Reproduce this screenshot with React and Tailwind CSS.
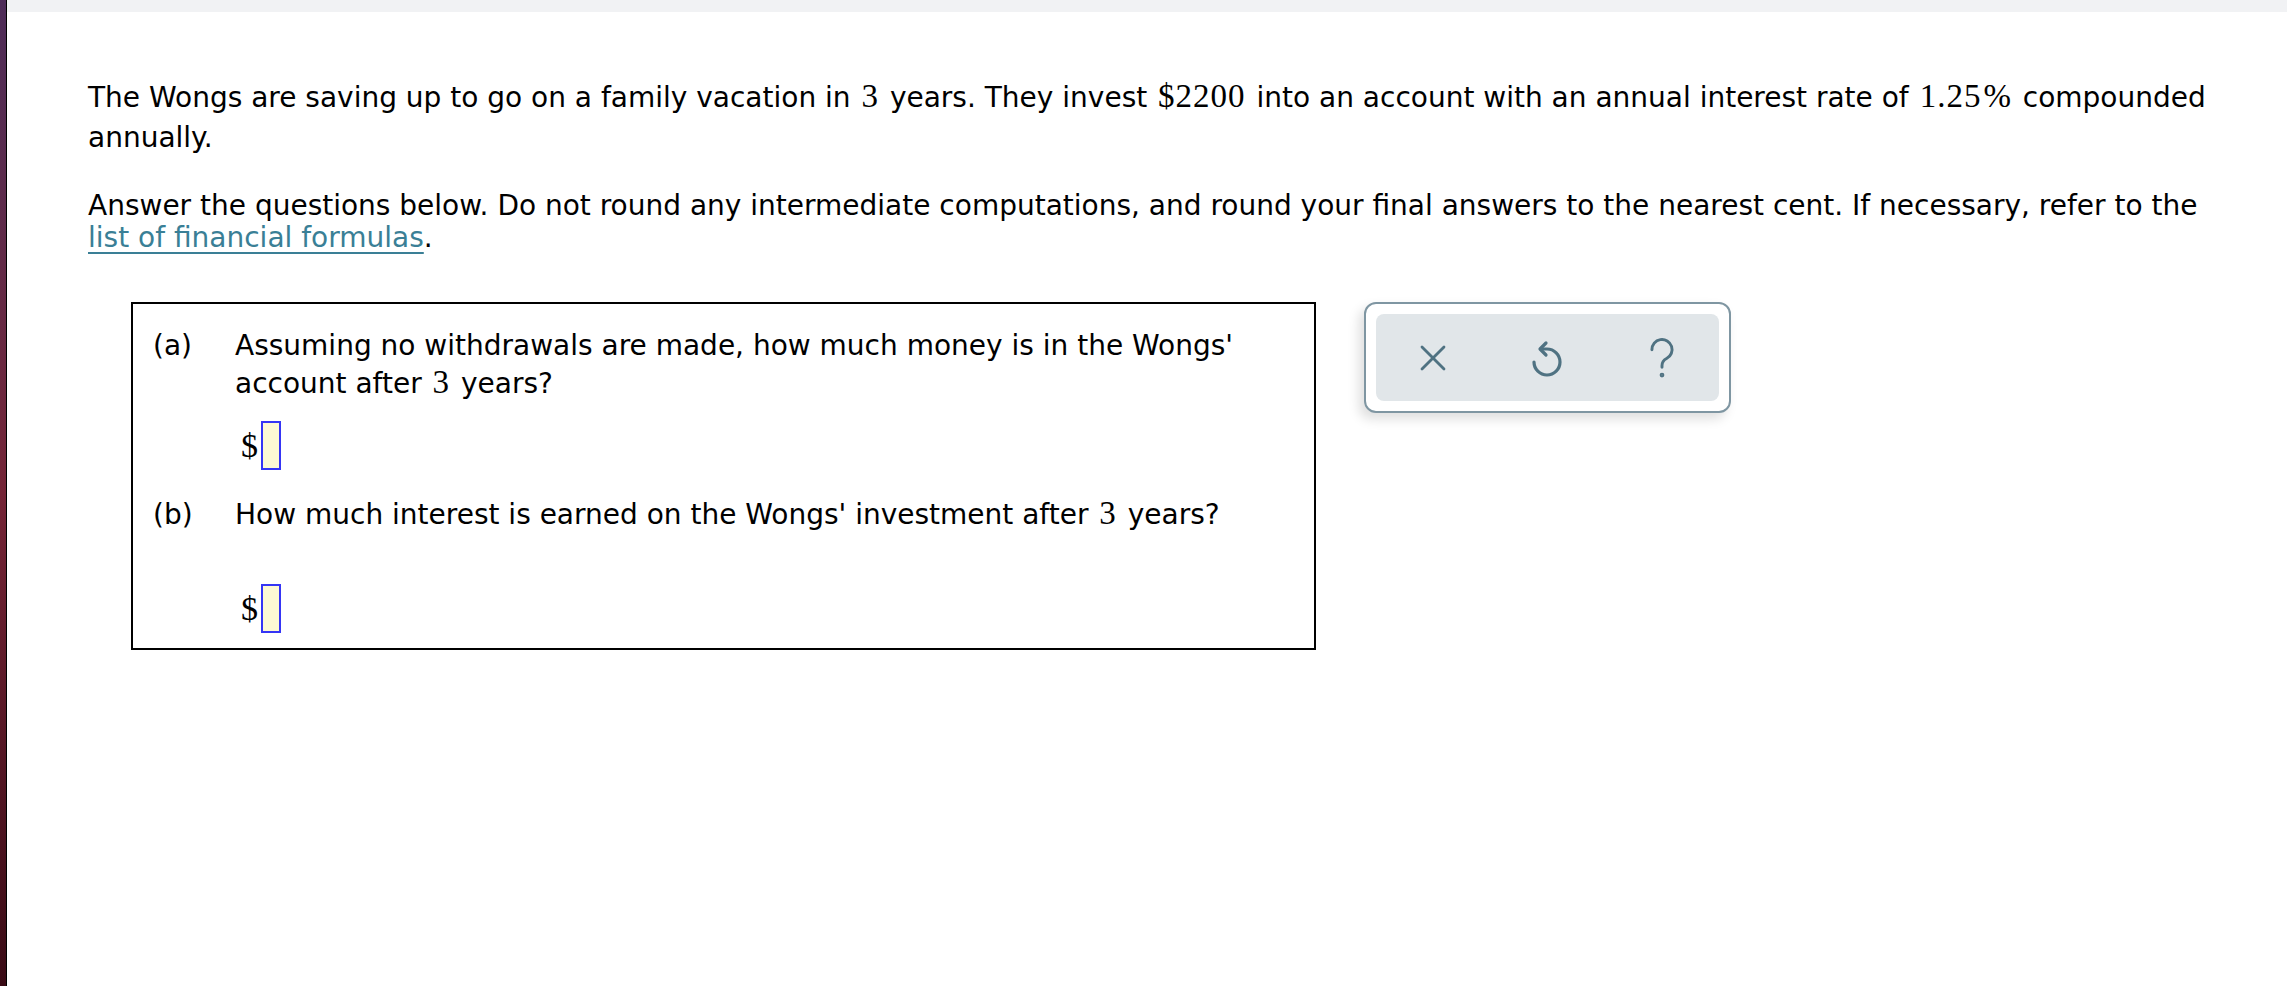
import { X } from "lucide-react";

function M({ children }) {
    return <span className="font-['Liberation_Serif',serif] text-[33px] leading-none tracking-[1px] px-[2px]">{children}</span>;
}

function Blank() {
    return (
        <div className="flex items-center">
            <span className="font-['Liberation_Serif',serif] text-[34px] leading-none mr-[3px]">$</span>
            <div className="w-[20px] h-[49px] border-2 border-[#3535f5] bg-[#fdf9d4]" />
        </div>
    );
}

function UndoIcon() {
    return (
        <svg width="48" height="48" viewBox="0 0 24 24" fill="none" stroke="#4f7282" strokeWidth="1.6" strokeLinecap="round" strokeLinejoin="round">
            <path d="M9 7.5 H12 A6.5 6.5 0 1 1 5.5 14" />
            <path d="M11.5 4.5 L8.5 7.5 L11.5 10.5" />
        </svg>
    );
}

function HelpIcon() {
    return (
        <svg width="44" height="44" viewBox="0 0 24 24" fill="none" stroke="#4f7282" strokeWidth="1.6" strokeLinecap="round" strokeLinejoin="round">
            <path d="M6.5 7.5 A5.5 5.5 0 1 1 14.5 12.3 C12.8 13.2 12 14.3 12 16.2 V17" />
            <circle cx="12" cy="21.3" r="0.5" fill="#4f7282" />
        </svg>
    );
}

function App() {
    return (
        <div className="min-h-screen flex bg-white text-black font-['DejaVu_Sans',sans-serif] text-[28px]">
            <div className="w-[7px] shrink-0 bg-gradient-to-b from-[#4d2c58] via-[#742436] to-[#3a0b15] border-r border-black" />

            <div className="flex-1">
                <div className="h-[12px] bg-[#f1f2f4]" />

                <div className="pl-[81px] pr-[46px] pt-[66px]">
                    <p className="leading-[40px]">
                        The Wongs are saving up to go on a family vacation in <M>3</M> years. They invest <M>$2200</M> into an account with an annual interest rate of <M>1.25<span className="ml-[2px]">%</span></M> compounded annually.
                    </p>

                    <p className="mt-[32px] leading-[32px]">
                        Answer the questions below. Do not round any intermediate computations, and round your final answers to the nearest cent. If necessary, refer to the{" "}
                        <a href="#" className="text-[#3a7f96] underline underline-offset-[5px]">list of financial formulas</a>.
                    </p>

                    <div className="mt-[48px] ml-[43px] flex items-start gap-[48px]">
                        <div className="w-[1185px] border-2 border-black pl-[20px] pr-[20px] pt-[23px] pb-[15px]">
                            <div className="flex leading-[38px]">
                                <div className="w-[82px] shrink-0">(a)</div>
                                <div>
                                    <p>Assuming no withdrawals are made, how much money is in the Wongs' account after <M>3</M> years?</p>
                                    <div className="mt-[18px] ml-[6px]">
                                        <Blank />
                                    </div>
                                </div>
                            </div>

                            <div className="flex leading-[38px] mt-[26px]">
                                <div className="w-[82px] shrink-0">(b)</div>
                                <div>
                                    <p>How much interest is earned on the Wongs' investment after <M>3</M> years?</p>
                                    <div className="mt-[50px] ml-[6px]">
                                        <Blank />
                                    </div>
                                </div>
                            </div>
                        </div>

                        <div className="w-[367px] h-[111px] border-2 border-[#7f96a2] rounded-[12px] bg-white p-[10px] shadow-[-5px_6px_12px_rgba(0,0,0,0.13)]">
                            <div className="h-full rounded-[8px] bg-[#e1e6e9] grid grid-cols-3 items-center justify-items-center">
                                <X size={44} color="#4f7282" strokeWidth={1.5} />
                                <UndoIcon />
                                <HelpIcon />
                            </div>
                        </div>
                    </div>
                </div>
            </div>
        </div>
    );
}

export default App;
